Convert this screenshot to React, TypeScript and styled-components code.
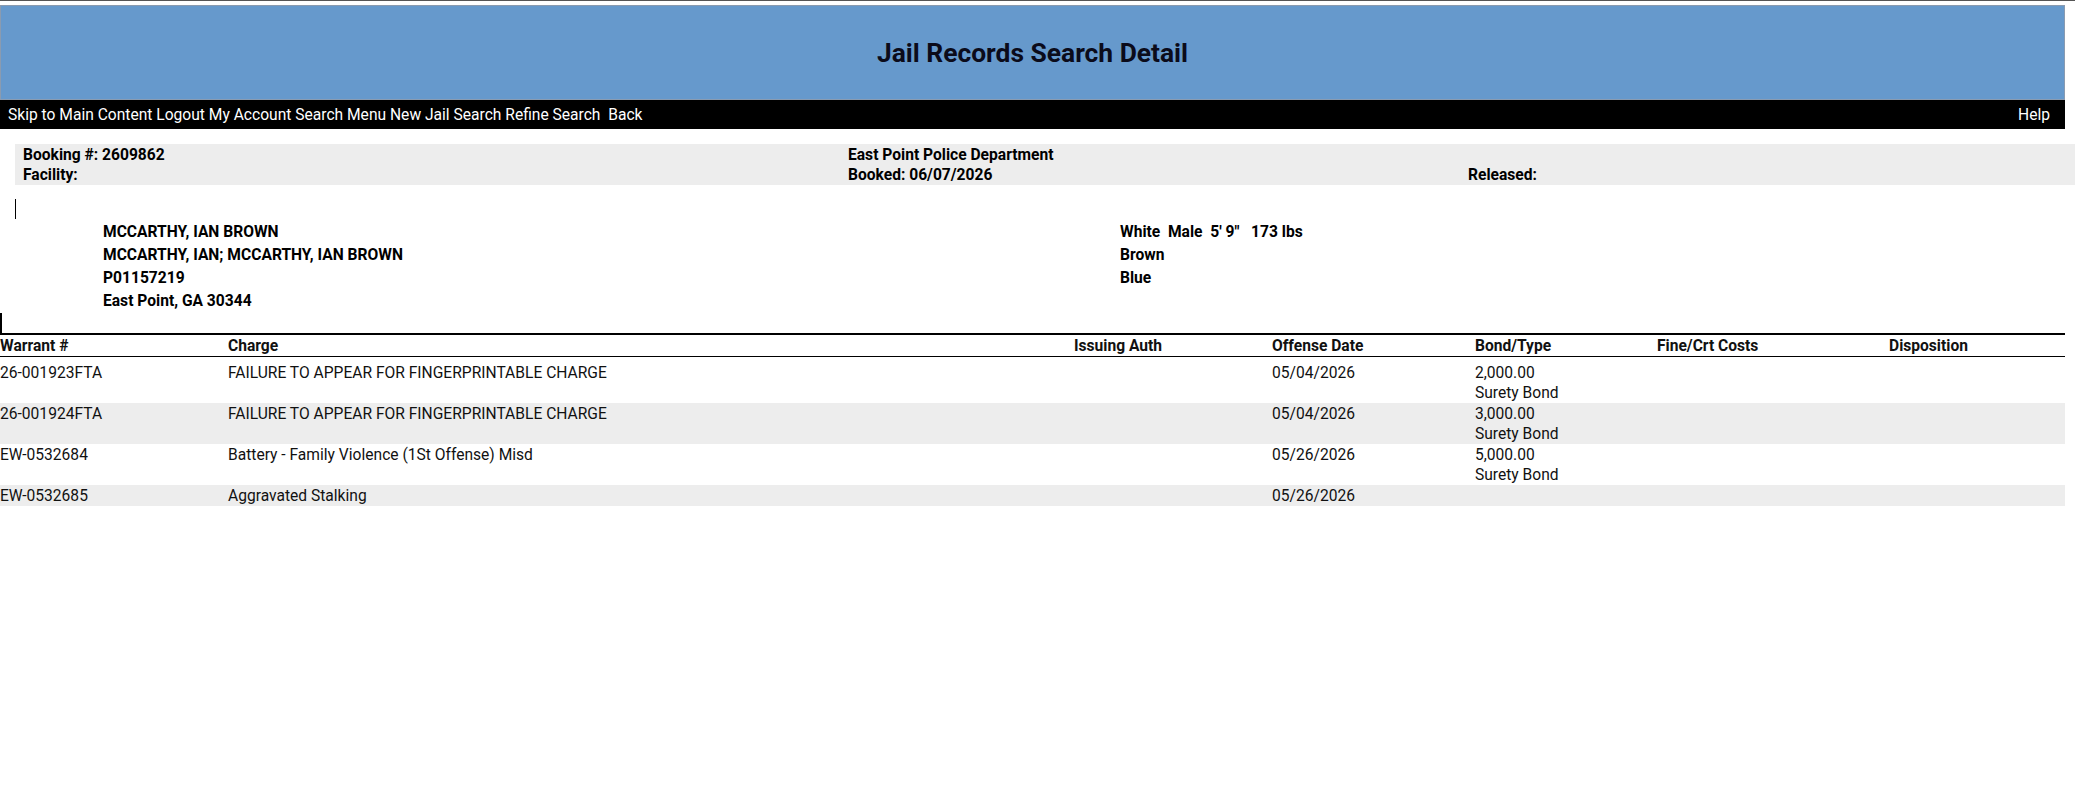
import styled, { createGlobalStyle } from "styled-components";

const GlobalStyle = createGlobalStyle`
  body {
    margin: 0;
    background: #fff;
    font-family: Roboto, "Liberation Sans", Arial, sans-serif;
    color: #000;
  }
`;

const Page = styled.div`
  border-top: 1px solid #555;
  padding-top: 4px;
`;

const Banner = styled.header`
  display: flex;
  align-items: center;
  justify-content: center;
  height: 93px;
  margin-right: 10px;
  border: 1px solid #8a9bb0;
  background: #6699cc;
`;

const Title = styled.h1`
  margin: 0;
  font-size: 26.4px;
  font-weight: 700;
  color: #0b0b1a;
`;

const NavBar = styled.nav`
  display: flex;
  align-items: center;
  justify-content: space-between;
  height: 29px;
  margin-right: 10px;
  padding: 0 15px 0 8px;
  background: #000;
  color: #fff;
  font-size: 15.6px;
  white-space: pre;
`;

const NavLink = styled.a`
  color: #fff;
  text-decoration: none;
  cursor: pointer;
`;

const InfoBox = styled.section`
  display: grid;
  grid-template-columns: 825px 620px 1fr;
  margin: 15px 0 0 15px;
  padding: 1px 0 0 8px;
  height: 40px;
  background: #ededed;
  font-size: 15.6px;
  font-weight: 700;
  line-height: 20px;
`;

const PhotoFrame = styled.div`
  width: 1px;
  height: 20px;
  margin: 14px 0 2px 15px;
  background: #000;
`;

const Person = styled.section`
  display: grid;
  grid-template-columns: 1017px 1fr;
  padding-left: 103px;
  font-size: 15.6px;
  font-weight: 700;
  line-height: 23px;
  white-space: pre;
`;

const Column = styled.div`
  display: flex;
  flex-direction: column;
`;

const EdgeMark = styled.div`
  width: 2px;
  height: 20px;
  background: #000;
`;

const Table = styled.div`
  width: 2065px;
  border-top: 2px solid #000;
  font-size: 15.6px;
  line-height: 20px;
`;

const Row = styled.div<{ $head?: boolean; $shade?: boolean; $first?: boolean }>`
  display: grid;
  grid-template-columns: 228px 846px 198px 203px 182px 232px 1fr;
  padding: ${({ $first }) => ($first ? "6px 0 0" : "0.5px 0")};
  font-weight: ${({ $head }) => ($head ? 700 : 400)};
  background: ${({ $shade }) => ($shade ? "#ededed" : "transparent")};
  border-bottom: ${({ $head }) => ($head ? "1px solid #000" : "none")};
  color: #111;
`;

const Cell = styled.div`
  display: flex;
  flex-direction: column;
`;

const charges = [
  {
    warrant: "26-001923FTA",
    charge: "FAILURE TO APPEAR FOR FINGERPRINTABLE CHARGE",
    date: "05/04/2026",
    bond: "2,000.00",
    type: "Surety Bond",
  },
  {
    warrant: "26-001924FTA",
    charge: "FAILURE TO APPEAR FOR FINGERPRINTABLE CHARGE",
    date: "05/04/2026",
    bond: "3,000.00",
    type: "Surety Bond",
  },
  {
    warrant: "EW-0532684",
    charge: "Battery - Family Violence (1St Offense) Misd",
    date: "05/26/2026",
    bond: "5,000.00",
    type: "Surety Bond",
  },
  {
    warrant: "EW-0532685",
    charge: "Aggravated Stalking",
    date: "05/26/2026",
    bond: "",
    type: "",
  },
];

const navItems = [
  "Skip to Main Content",
  "Logout",
  "My Account",
  "Search Menu",
  "New Jail Search",
  "Refine Search",
  " Back",
];

export default function App() {
  return (
    <>
      <GlobalStyle />
      <Page>
        <Banner>
          <Title>Jail Records Search Detail</Title>
        </Banner>
        <NavBar>
          <span>
            {navItems.map((item, i) => (
              <span key={item}>
                {i > 0 && " "}
                <NavLink>{item}</NavLink>
              </span>
            ))}
          </span>
          <NavLink>Help</NavLink>
        </NavBar>

        <InfoBox>
          <div>Booking #: 2609862</div>
          <div>East Point Police Department</div>
          <div />
          <div>Facility:</div>
          <div>Booked: 06/07/2026</div>
          <div>Released:</div>
        </InfoBox>

        <PhotoFrame />

        <Person>
          <Column>
            <span>MCCARTHY, IAN BROWN</span>
            <span>MCCARTHY, IAN; MCCARTHY, IAN BROWN</span>
            <span>P01157219</span>
            <span>East Point, GA 30344</span>
          </Column>
          <Column>
            <span>{"White  Male  5' 9\"   173 lbs"}</span>
            <span>Brown</span>
            <span>Blue</span>
          </Column>
        </Person>

        <EdgeMark />

        <Table>
          <Row $head>
            <div>Warrant #</div>
            <div>Charge</div>
            <div>Issuing Auth</div>
            <div>Offense Date</div>
            <div>Bond/Type</div>
            <div>Fine/Crt Costs</div>
            <div>Disposition</div>
          </Row>
          {charges.map((c, i) => (
            <Row key={c.warrant} $shade={i % 2 === 1} $first={i === 0}>
              <div>{c.warrant}</div>
              <div>{c.charge}</div>
              <div />
              <div>{c.date}</div>
              <Cell>
                {c.bond && <span>{c.bond}</span>}
                {c.type && <span>{c.type}</span>}
              </Cell>
              <div />
              <div />
            </Row>
          ))}
        </Table>
      </Page>
    </>
  );
}
